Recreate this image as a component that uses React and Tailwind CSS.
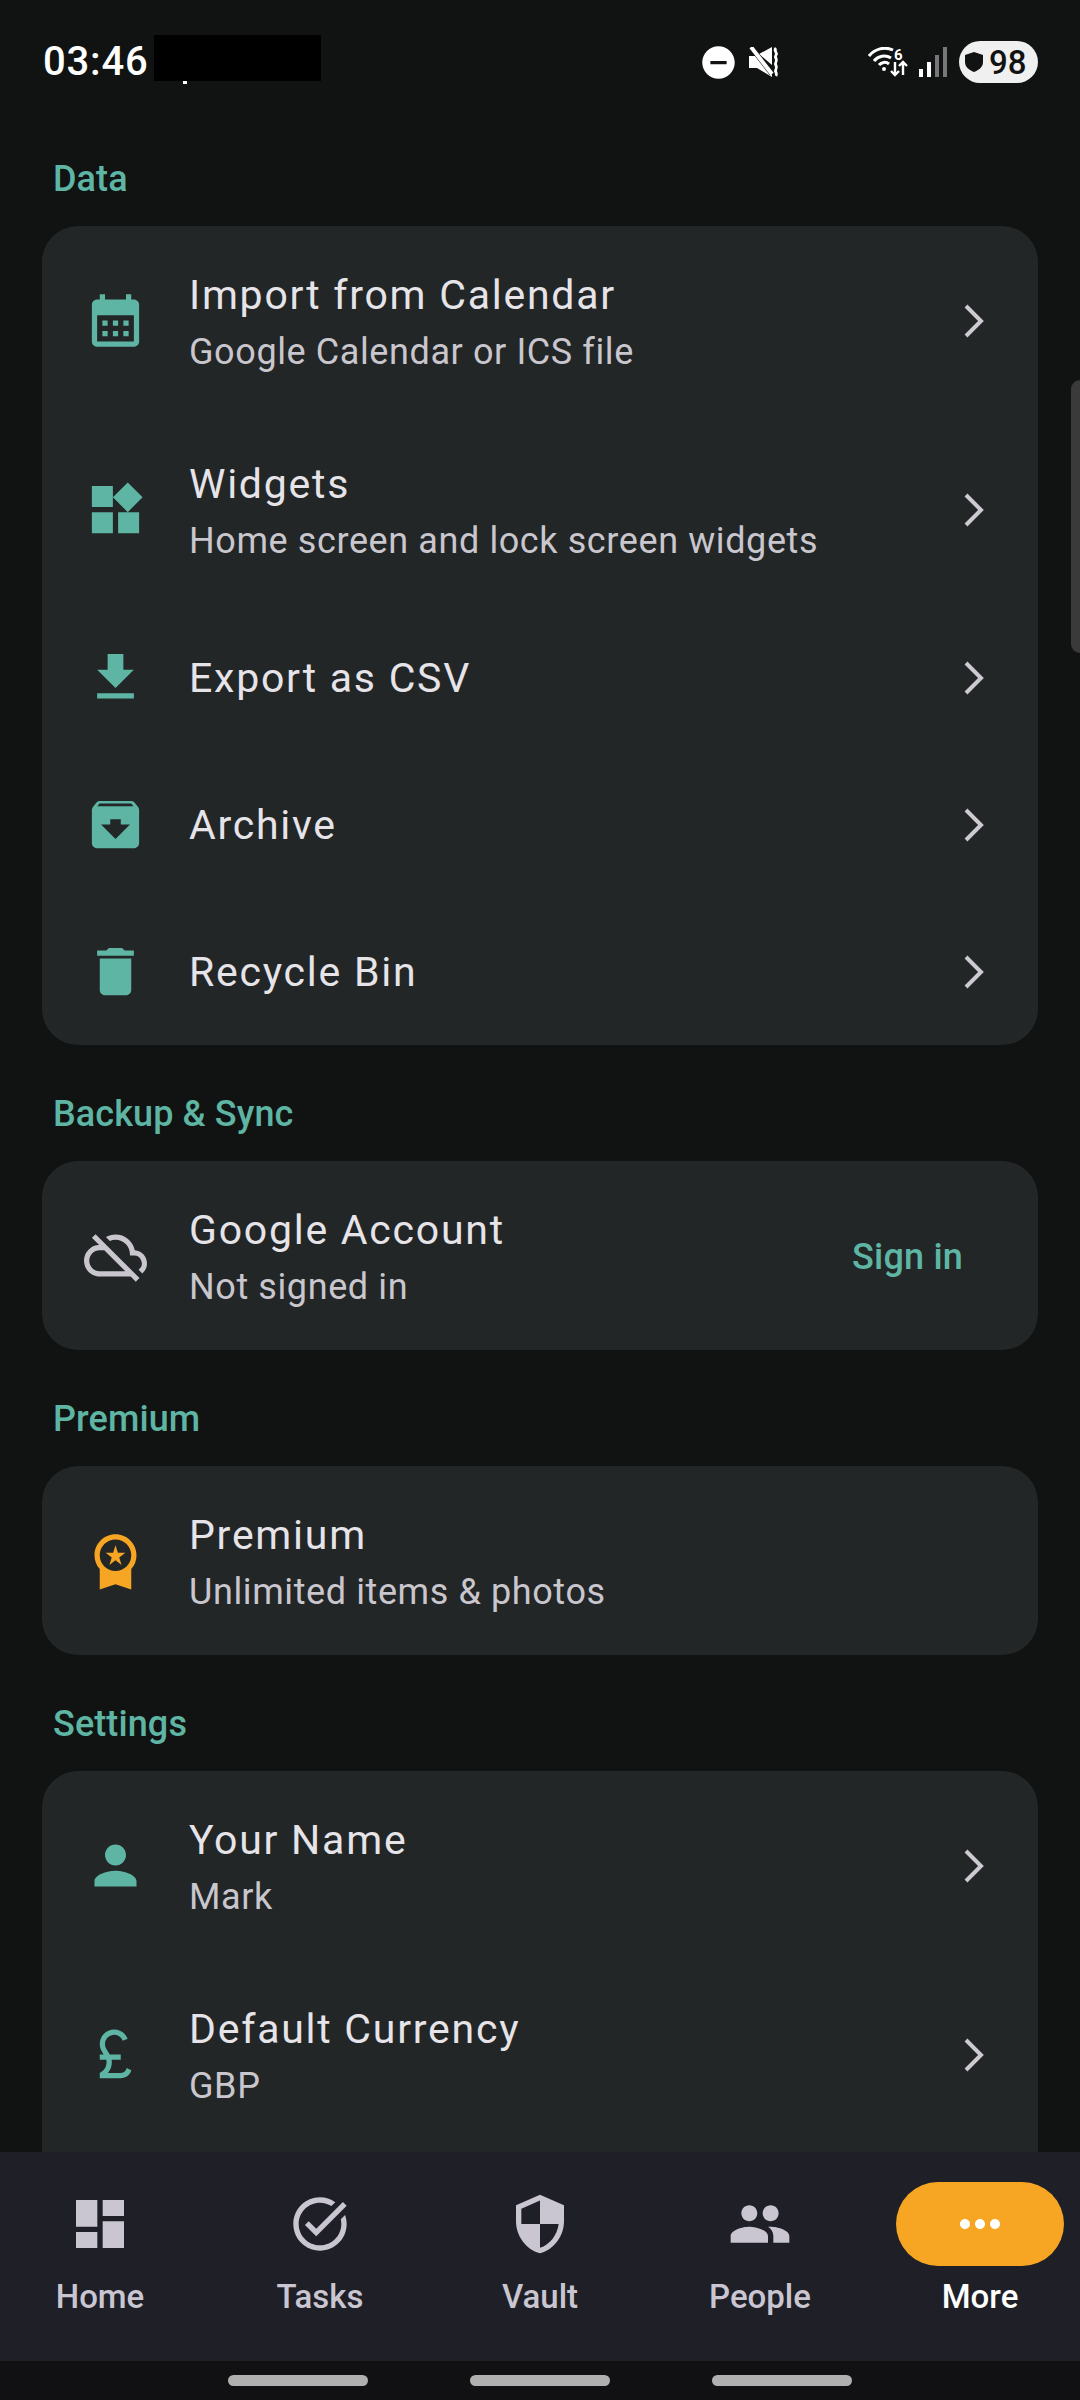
import {
  MdArchive,
  MdCalendarMonth,
  MdCurrencyPound,
  MdDashboard,
  MdDelete,
  MdDoNotDisturbOn,
  MdFileDownload,
  MdMoreHoriz,
  MdOutlineCloudOff,
  MdPeople,
  MdPerson,
  MdSecurity,
  MdTaskAlt,
  MdWidgets,
  MdWorkspacePremium,
} from "react-icons/md";

const FONT = "[font-family:Roboto,'Noto_Sans',sans-serif]";

function Chevron() {
  return (
    <svg viewBox="0 0 20 34" className="w-[20px] h-[34px] shrink-0" fill="none" stroke="#cdcad1" strokeWidth="4">
      <path d="M2 2 L17 17 L2 32" />
    </svg>
  );
}

function MuteIcon() {
  return (
    <svg viewBox="0 0 30 30" className="w-[30px] h-[30px]" fill="#fff">
      <path d="M0 9h7L23 24v6L8 21H0z" />
      <path d="M10 7L23 0v18z" />
      <path d="M2 0l21 27" stroke="#111212" strokeWidth="5" />
      <path d="M2 0l21 27" stroke="#fff" strokeWidth="4" />
      <path d="M27 1c-3 3 2 4 0 7s2 4 0 7 2 4 0 7 2 4 0 7" fill="none" stroke="#fff" strokeWidth="2.8" />
    </svg>
  );
}

function WifiIcon() {
  return (
    <svg viewBox="0 0 40 30" className="w-[40px] h-[30px]" fill="none" stroke="#fff" strokeWidth="3">
      <path d="M1 9A20 20 0 0 1 25 3" />
      <path d="M6 14A13 13 0 0 1 23 11" />
      <path d="M11 18A7 7 0 0 1 21 17" />
      <circle cx="16" cy="22" r="2" fill="#fff" stroke="none" />
      <path d="M27 15v13M23 24l4 4 4-4" strokeWidth="2.4" />
      <path d="M35 28v-13M31 19l4-4 4 4" strokeWidth="2.4" />
      <text x="26" y="13" fill="#fff" stroke="none" fontSize="15" fontWeight="700" fontFamily="Roboto">6</text>
    </svg>
  );
}

function SignalIcon() {
  return (
    <svg viewBox="0 0 28 30" className="w-[28px] h-[30px]">
      <rect x="0" y="22" width="4" height="8" fill="#fff" />
      <rect x="8" y="15" width="4" height="15" fill="#fff" />
      <rect x="16" y="8" width="4" height="22" fill="#77777a" />
      <rect x="24" y="0" width="4" height="30" fill="#77777a" />
    </svg>
  );
}

function StatusBar() {
  return (
    <div className="h-[124px] shrink-0 flex items-center pl-[43px] pr-[42px] text-white">
      <span className="text-[40px] font-medium leading-none tracking-[0.8px]">03:46</span>
      <div className="relative w-[167px] h-[46px] bg-black ml-[6px] -mt-[8px]">
        <div className="absolute left-[29px] -bottom-[3px] w-[4px] h-[3px] bg-white" />
      </div>
      <div className="flex-1" />
      <MdDoNotDisturbOn className="text-[39px] text-white" />
      <div className="ml-[11px]">
        <MuteIcon />
      </div>
      <div className="ml-[89px]">
        <WifiIcon />
      </div>
      <div className="ml-[11px]">
        <SignalIcon />
      </div>
      <div className="ml-[12px] w-[79px] h-[42px] rounded-full bg-[#f0f0f0] flex items-center pl-[6px] text-[#111212]">
        <svg viewBox="0 0 18 20" className="w-[18px] h-[20px]" fill="#111212">
          <path d="M9 0l9 3v7c0 5-4 8-9 10-5-2-9-5-9-10V3z" />
        </svg>
        <span className="ml-[6px] text-[33px] font-medium leading-none">98</span>
      </div>
    </div>
  );
}

function Row({ icon: Icon, iconClass = "text-[#5eb5a3]", title, sub, trailing = <Chevron /> }) {
  return (
    <div className={`flex items-center pl-[42px] pr-[54px] ${sub ? "h-[189px]" : "h-[147px]"}`}>
      <Icon className={`text-[63px] shrink-0 ${iconClass}`} />
      <div className={`ml-[42px] flex-1 flex flex-col gap-[8px] ${sub ? "pt-[3px]" : ""}`}>
        <div className="text-[41px] leading-[52px] tracking-[1.75px] text-[#e6e4e9]">{title}</div>
        {sub && <div className="text-[36px] leading-[46px] tracking-[0.6px] text-[#c9c6ce]">{sub}</div>}
      </div>
      {trailing}
    </div>
  );
}

function Section({ label, children }) {
  return (
    <section className="shrink-0">
      <h2 className="h-[40px] mb-[28px] pl-[11px] text-[36px] leading-[43px] tracking-[0.1px] font-medium text-[#5eb5a3]">{label}</h2>
      <div className="bg-[#222627] rounded-[36px]">{children}</div>
    </section>
  );
}

function NavItem({ icon: Icon, label, active }) {
  return (
    <div className="w-[168px] flex flex-col items-center">
      <div className={`w-[168px] h-[84px] rounded-full flex items-center justify-center ${active ? "bg-[#f6a623]" : ""}`}>
        <Icon className={active ? "text-[60px] text-white" : "text-[64px] text-[#c9c6d2]"} />
      </div>
      <span className={`mt-[8px] text-[33px] leading-[46px] font-medium ${active ? "text-white" : "text-[#c9c6d2]"}`}>{label}</span>
    </div>
  );
}

export default function App() {
  return (
    <div className={`relative w-[1080px] h-[2400px] overflow-hidden flex flex-col bg-[#111212] ${FONT}`}>
      <StatusBar />

      <main className="flex-1 min-h-0 overflow-hidden flex flex-col gap-[48px] pt-[34px] px-[42px]">
        <Section label="Data">
          <Row icon={MdCalendarMonth} title="Import from Calendar" sub="Google Calendar or ICS file" />
          <Row icon={MdWidgets} title="Widgets" sub="Home screen and lock screen widgets" />
          <Row icon={MdFileDownload} title="Export as CSV" />
          <Row icon={MdArchive} title="Archive" />
          <Row icon={MdDelete} title="Recycle Bin" />
        </Section>
        <Section label="Backup & Sync">
          <Row
            icon={MdOutlineCloudOff}
            iconClass="text-[#c9c6ce]"
            title="Google Account"
            sub="Not signed in"
            trailing={<span className="mr-[21px] mt-[2px] text-[36px] tracking-[0.2px] font-medium text-[#5eb5a3]">Sign in</span>}
          />
        </Section>
        <Section label="Premium">
          <Row icon={MdWorkspacePremium} iconClass="text-[#f6a623]" title="Premium" sub="Unlimited items & photos" trailing={null} />
        </Section>
        <Section label="Settings">
          <Row icon={MdPerson} title="Your Name" sub="Mark" />
          <Row icon={MdCurrencyPound} title="Default Currency" sub="GBP" />
          <div className="h-[120px]" />
        </Section>
      </main>

      <nav className="shrink-0 h-[209px] bg-[#1f1f28] pt-[30px] px-[16px] flex justify-between">
        <NavItem icon={MdDashboard} label="Home" />
        <NavItem icon={MdTaskAlt} label="Tasks" />
        <NavItem icon={MdSecurity} label="Vault" />
        <NavItem icon={MdPeople} label="People" />
        <NavItem icon={MdMoreHoriz} label="More" active />
      </nav>

      <div className="shrink-0 h-[39px] bg-[#111114] flex justify-center gap-[102px] pt-[14px]">
        <div className="w-[140px] h-[11px] rounded-full bg-[#b0b0b0]" />
        <div className="w-[140px] h-[11px] rounded-full bg-[#b0b0b0]" />
        <div className="w-[140px] h-[11px] rounded-full bg-[#b0b0b0]" />
      </div>

      {/* overlay scrollbar */}
      <div className="absolute right-0 top-[380px] w-[9px] h-[273px] rounded-l-[9px] bg-[#3a3a3a]" />
    </div>
  );
}
